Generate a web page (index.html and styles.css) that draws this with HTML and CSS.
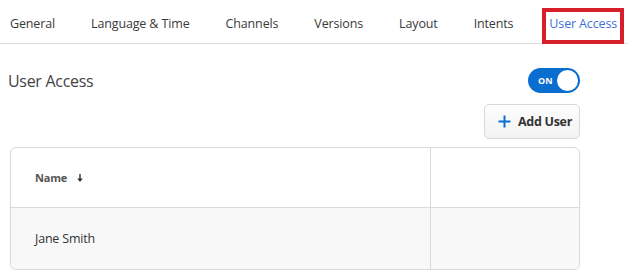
FILE: index.html
```html
<!DOCTYPE html>
<html>
<head>
<meta charset="utf-8">
<link rel="stylesheet" href="styles.css">
</head>
<body>
<nav class="tabs">
  <a class="tab">General</a>
  <a class="tab">Language &amp; Time</a>
  <a class="tab">Channels</a>
  <a class="tab">Versions</a>
  <a class="tab">Layout</a>
  <a class="tab">Intents</a>
  <a class="tab active">User Access</a>
</nav>
<main class="section">
  <div class="head">
    <h1 class="title">User Access</h1>
    <div class="toggle"><span class="toggle-label">ON</span><span class="knob"></span></div>
  </div>
  <div class="actions">
    <button class="btn"><svg class="plus" width="13" height="13" viewBox="0 0 13 13"><path d="M6.5 0.5v12M0.5 6.5h12" stroke="#0a6ed1" stroke-width="2" fill="none"/></svg><span>Add User</span></button>
  </div>
  <div class="table">
    <div class="row header">
      <div class="cell name-cell"><span class="th">Name</span><svg class="sort" width="6" height="8" viewBox="0 0 6 8"><path d="M3 0v6" stroke="#333" stroke-width="1.4"/><path d="M0.2 4.6L3 8L5.8 4.6Z" fill="#333"/></svg></div>
      <div class="cell"></div>
    </div>
    <div class="row body">
      <div class="cell name-cell">Jane Smith</div>
      <div class="cell"></div>
    </div>
  </div>
</main>
</body>
</html>
```
FILE: styles.css
```css
* { box-sizing: border-box; }
body {
  margin: 0;
  font-family: "Open Sans", "Noto Sans", sans-serif;
  color: #333;
  background: #fff;
}
.tabs {
  display: flex;
  align-items: center;
  gap: 36px;
  height: 44px;
  padding: 4px 0 0 10px;
  border-bottom: 1px solid #dcdcdc;
  font-size: 12.5px;
  line-height: 17px;
  letter-spacing: -0.14px;
}
.tab {
  color: #3a3a3a;
  white-space: nowrap;
}
.tab.active {
  color: #3f6fdb;
  outline: 4px solid #d61f2a;
  outline-offset: -1px;
  padding: 4px 4px 9px 4px;
  margin: 5px 0 0 -4px;
}
.section {
  padding: 0 48px 0 10px;
}
.head {
  display: flex;
  justify-content: space-between;
  align-items: center;
  margin-top: 24px;
  height: 25px;
}
.title {
  margin: 0 0 0 -2px;
  font-size: 16px;
  font-weight: 400;
  color: #444;
  letter-spacing: -0.3px;
}
.toggle {
  display: flex;
  align-items: center;
  justify-content: space-between;
  width: 52px;
  height: 25px;
  border-radius: 13px;
  background: #0a6ed1;
  padding: 0 2px 0 10px;
}
.toggle-label {
  color: #fff;
  font-size: 9px;
  font-weight: 700;
}
.knob {
  width: 21px;
  height: 21px;
  border-radius: 50%;
  background: #fff;
}
.actions {
  display: flex;
  justify-content: flex-end;
  margin-top: 11px;
}
.btn {
  display: flex;
  align-items: center;
  gap: 7px;
  height: 35px;
  width: 96px;
  padding: 0 0 0 13px;
  border: 1px solid #d8d8d8;
  border-radius: 5px;
  background: linear-gradient(#fdfdfd, #f3f3f3);
  font-family: inherit;
  font-size: 12.5px;
  font-weight: 700;
  color: #333;
  letter-spacing: -0.3px;
}
.table {
  margin-top: 8px;
  border: 1px solid #dadada;
  border-radius: 6px;
  overflow: hidden;
  box-shadow: 0 1px 2px rgba(0,0,0,0.06);
}
.row {
  display: grid;
  grid-template-columns: 420px 1fr;
}
.row.header { height: 60px; border-bottom: 1px solid #dadada; }
.row.body { height: 61px; background: #f8f8f8; }
.cell {
  display: flex;
  align-items: center;
}
.name-cell {
  border-right: 1px solid #dadada;
  padding-left: 24px;
  font-size: 12.5px;
  color: #333;
  letter-spacing: -0.2px;
}
.th {
  font-size: 11px;
  font-weight: 700;
  color: #555;
}
.sort { margin-left: 10px; }
```
